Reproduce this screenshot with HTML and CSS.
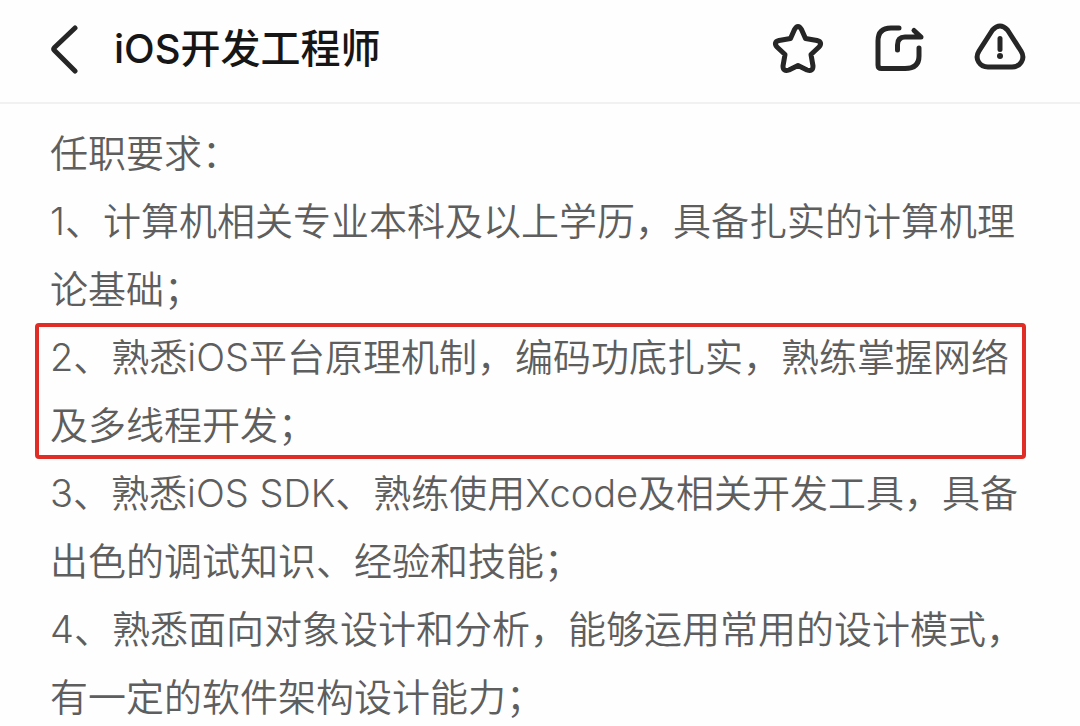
FILE: index.html
```html
<!DOCTYPE html>
<html lang="zh-CN">
<head>
    <meta charset="UTF-8">
    <meta name="viewport" content="width=device-width, initial-scale=1.0">
    <title>iOS开发工程师</title>
    <link rel="stylesheet" href="styles.css">
</head>
<body>

<header class="navbar">
    <button class="icon-btn back" type="button" aria-label="返回">
        <svg width="30" height="52" viewBox="0 0 30 52">
            <path d="M25 5 L4.500 24.500 Q3 26 4.500 27.500 L25 48"/>
        </svg>
    </button>
    <h1>iOS开发工程师</h1>
    <div class="actions">
        <button class="icon-btn" type="button" aria-label="收藏">
            <svg width="52" height="52" viewBox="0 0 52 52">
                <path d="M22.500 6.500 Q26 0.500 29.500 6.500 L33.500 15.500 L45 17.500 Q51 19 47 24 L39 31.500 L41 43 Q41 49 35 47 L26 42.500 L17 47 Q11 49 11 43 L13 31.500 L5 24 Q1 19 7 17.500 L18.500 15.500 Z"/>
            </svg>
        </button>
        <button class="icon-btn" type="button" aria-label="分享">
            <svg width="52" height="52" viewBox="0 0 52 52">
                <path d="M26 5 H18 Q5 5 5 18 V42 Q5 45.500 8.500 45.500 H32 Q46 45.500 46 33 V25"/>
                <path d="M24.500 27 V22 Q24.500 14 32 14 H48 L41 7.500"/>
            </svg>
        </button>
        <button class="icon-btn" type="button" aria-label="举报">
            <svg width="52" height="52" viewBox="0 0 52 52">
                <path d="M18.500 7 Q26 -1 33.500 7 L47 28 C52 36 46 44 38 44 H14 C6 44 0 36 5 28 Z"/>
                <path d="M26 15.500 V26.500"/>
                <circle cx="26" cy="33" r="3"/>
            </svg>
        </button>
    </div>
</header>

<main class="requirements">
    <p>任职要求：</p>
    <p>1、计算机相关专业本科及以上学历，具备扎实的计算机理论基础；</p>
    <p class="highlight">2、熟悉iOS平台原理机制，编码功底扎实，熟练掌握网络及多线程开发；</p>
    <p>3、熟悉iOS SDK、熟练使用Xcode及相关开发工具，具备出色的调试知识、经验和技能；</p>
    <p>4、熟悉面向对象设计和分析，能够运用常用的设计模式，有一定的软件架构设计能力；</p>
</main>

</body>
</html>
```

FILE: styles.css
```css
* {
    box-sizing: border-box;
}
body {
    margin: 0;
    background-color: #fefefe;
    color: #5e5e5e;
    font-family: Inter, "Noto Sans CJK SC", sans-serif;
}
.navbar {
    display: flex;
    align-items: center;
    height: 104px;
    padding: 0 54px 4px 50px;
    border-bottom: 2px solid #f1f1f1;
}
.navbar h1 {
    margin: 0 0 0 34px;
    color: #161616;
    font-size: 40px;
    font-weight: 500;
    line-height: 56px;
}
.actions {
    display: flex;
    gap: 49px;
    margin-left: auto;
}
.icon-btn {
    display: block;
    padding: 0;
    border: 0;
    background: none;
    color: #262626;
}
.icon-btn svg {
    display: block;
    fill: none;
    stroke: currentColor;
    stroke-width: 5;
    stroke-linecap: round;
    stroke-linejoin: round;
}
.icon-btn circle {
    fill: currentColor;
    stroke: none;
}
.requirements {
    padding: 15px 52px 0 50px;
}
.requirements p {
    margin: 0;
    font-size: 38px;
    font-weight: 350;
    line-height: 68px;
}
.requirements .highlight {
    margin: 0 2px 0 -15px;
    padding-left: 15px;
    border-radius: 4px;
    outline: 4px solid #e02d26;
    outline-offset: -4px;
}
```
